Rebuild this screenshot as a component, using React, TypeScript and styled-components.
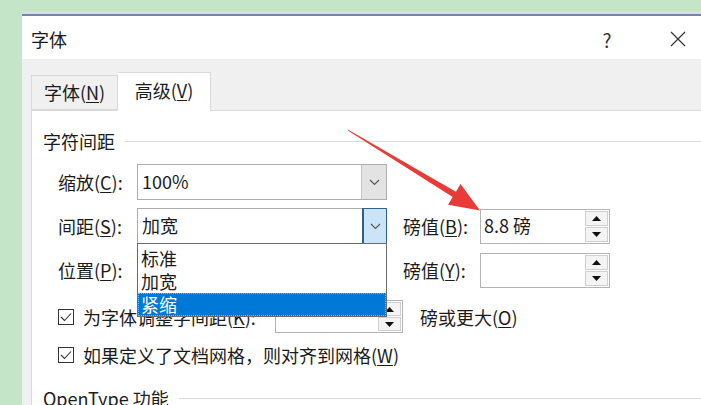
import React from "react";
import styled, { createGlobalStyle } from "styled-components";

const GlobalStyle = createGlobalStyle`
  html, body {
    margin: 0;
    padding: 0;
    background: #c4e5c7;
    overflow: hidden;
  }
  body {
    font-family: "Noto Sans CJK SC", "Microsoft YaHei", sans-serif;
    color: #1b1b1b;
  }
`;

const Screen = styled.div`
  position: relative;
  width: 701px;
  height: 405px;
  padding: 11px 0 0 22px;
  box-sizing: border-box;
  overflow: hidden;
`;

const Dialog = styled.div`
  width: 700px;
  height: 420px;
  background: #f0f0f0;
  border-top: 3px solid #d9dddd;
`;

const TitleBar = styled.div`
  height: 45px;
  display: flex;
  align-items: center;
  padding: 3px 21px 0 9px;
  box-sizing: border-box;
  background: #fff;
  border-top: 2px solid #6d8aa4;
  font-size: 18px;
`;

const TitleText = styled.span`
  flex: 1;
`;

const TitleButton = styled.div<{ $gap?: number }>`
  width: 46px;
  height: 36px;
  display: flex;
  align-items: center;
  justify-content: center;
  margin-left: ${(p) => p.$gap ?? 0}px;
  font-size: 19px;
  color: #333;
`;

const Body = styled.div`
  padding: 13px 0 0 9px;
`;

const TabRow = styled.div`
  display: flex;
  align-items: flex-end;
  height: 38px;
`;

const Tab = styled.div<{ $active?: boolean }>`
  position: relative;
  z-index: ${(p) => (p.$active ? 2 : 1)};
  width: ${(p) => (p.$active ? 93 : 87)}px;
  height: ${(p) => (p.$active ? 39 : 35)}px;
  margin-bottom: ${(p) => (p.$active ? -1 : 0)}px;
  box-sizing: border-box;
  display: flex;
  align-items: center;
  justify-content: center;
  padding-bottom: ${(p) => (p.$active ? 4 : 1)}px;
  background: ${(p) => (p.$active ? "#fff" : "#f0f0f0")};
  border: 1px solid #d9d9d9;
  border-bottom: ${(p) => (p.$active ? "none" : "1px solid #d9d9d9")};
  border-left: ${(p) => (p.$active ? "none" : "1px solid #d9d9d9")};
  font-size: 18px;
`;

const Panel = styled.div`
  height: 320px;
  background: #fff;
  border: 1px solid #d9d9d9;
  padding: 20px 0 0 11px;
  box-sizing: border-box;
`;

const SectionHeader = styled.div<{ $top?: number }>`
  display: flex;
  align-items: center;
  gap: 10px;
  height: 20px;
  margin-top: ${(p) => p.$top ?? 0}px;
  margin-right: 11px;
  font-size: 18px;
  line-height: 20px;
  white-space: nowrap;

  &::after {
    content: "";
    flex: 1;
    border-top: 1px solid #dcdcdc;
  }
`;

const FormGrid = styled.div`
  display: grid;
  grid-template-columns: 79px 250px 93px 130px;
  grid-auto-rows: 36px;
  row-gap: 8px;
  margin-top: 13px;
  padding-left: 15px;
  align-items: center;
  font-size: 18px;
`;

const Label = styled.div<{ $indent?: number }>`
  padding-left: ${(p) => p.$indent ?? 0}px;
  white-space: nowrap;
`;

const Combo = styled.div`
  position: relative;
  height: 36px;
  display: flex;
  box-sizing: border-box;
  border: 1px solid #adadad;
  background: #fff;
`;

const ComboValue = styled.div`
  flex: 1;
  display: flex;
  align-items: center;
  padding-left: 4px;
  padding-bottom: 2px;
`;

const ComboButton = styled.div<{ $focused?: boolean }>`
  width: 24px;
  display: flex;
  align-items: center;
  justify-content: center;
  background: ${(p) => (p.$focused ? "#cce4f7" : "#e3e3e3")};
  border-left: 1px solid ${(p) => (p.$focused ? "#2c628b" : "#c6c6c6")};
  box-shadow: ${(p) => (p.$focused ? "inset 0 0 0 1px #2c628b" : "none")};
  margin: ${(p) => (p.$focused ? "-1px -1px -1px 0" : "0")};
`;

const DropList = styled.div`
  position: absolute;
  z-index: 5;
  top: 100%;
  left: -1px;
  width: 250px;
  padding-top: 3px;
  box-sizing: border-box;
  background: #fff;
  border: 1px solid #6b6b6b;
`;

const DropItem = styled.div<{ $selected?: boolean }>`
  height: 23px;
  line-height: 23px;
  padding-left: 3px;
  background: ${(p) => (p.$selected ? "#0078d7" : "transparent")};
  color: ${(p) => (p.$selected ? "#fff" : "inherit")};
  outline: ${(p) => (p.$selected ? "1px dotted #8fb8e0" : "none")};
  outline-offset: -1px;
`;

const Spin = styled.div<{ $width?: number; $height?: number }>`
  width: ${(p) => p.$width ?? 130}px;
  height: ${(p) => p.$height ?? 36}px;
  display: flex;
  box-sizing: border-box;
  border: 1px solid #b4b4b4;
  background: #fff;
`;

const SpinValue = styled.div`
  flex: 1;
  display: flex;
  align-items: center;
  padding-left: 3px;
  padding-bottom: 2px;
`;

const SpinButtons = styled.div`
  width: 25px;
  display: flex;
  flex-direction: column;
  gap: 1px;
  padding: 1px;
  box-sizing: border-box;
`;

const SpinButton = styled.div`
  flex: 1;
  display: flex;
  align-items: center;
  justify-content: center;
  background: #f4f4f4;
  border: 1px solid #cfcfcf;
`;

const CheckRow = styled.div<{ $top: number; $height: number }>`
  display: flex;
  align-items: center;
  height: ${(p) => p.$height}px;
  margin-top: ${(p) => p.$top}px;
  padding-left: 15px;
  font-size: 18px;
  white-space: nowrap;
`;

const CheckBox = styled.div`
  width: 16px;
  height: 16px;
  box-sizing: border-box;
  border: 1px solid #333;
  background: #fff;
  display: flex;
  align-items: center;
  justify-content: center;
  margin-right: 9px;
`;

const CheckText = styled.span<{ $width?: number }>`
  width: ${(p) => (p.$width ? `${p.$width}px` : "auto")};
`;

const After = styled.span`
  margin-left: 17px;
`;

const Key = styled.u`
  text-underline-offset: 2px;
  text-decoration-thickness: 1px;
`;

const ArrowLayer = styled.svg`
  position: absolute;
  left: 0;
  top: 0;
  z-index: 10;
  pointer-events: none;
`;

const Chevron = () => (
  <svg width="11" height="7" viewBox="0 0 11 7">
    <path d="M1 1l4.5 4.5L10 1" fill="none" stroke="#555" strokeWidth="1.1" />
  </svg>
);

const Up = () => (
  <svg width="9" height="5" viewBox="0 0 9 5">
    <path d="M0 5h9L4.5 0z" fill="#111" />
  </svg>
);

const Down = () => (
  <svg width="9" height="5" viewBox="0 0 9 5">
    <path d="M0 0h9L4.5 5z" fill="#111" />
  </svg>
);

const Tick = () => (
  <svg width="12" height="10" viewBox="0 0 12 10">
    <path d="M1 5l3.5 3.5L11 1.5" fill="none" stroke="#333" strokeWidth="1.1" />
  </svg>
);

const SpinBox = ({ value, width, height }: { value?: string; width?: number; height?: number }) => (
  <Spin $width={width} $height={height}>
    <SpinValue>{value}</SpinValue>
    <SpinButtons>
      <SpinButton>
        <Up />
      </SpinButton>
      <SpinButton>
        <Down />
      </SpinButton>
    </SpinButtons>
  </Spin>
);

const App = () => {
  return (
    <>
      <GlobalStyle />
      <Screen>
        <Dialog>
          <TitleBar>
            <TitleText>字体</TitleText>
            <TitleButton>?</TitleButton>
            <TitleButton $gap={25}>
              <svg width="16" height="16" viewBox="0 0 16 16">
                <path d="M1 1l14 14M15 1L1 15" stroke="#333" strokeWidth="1.2" />
              </svg>
            </TitleButton>
          </TitleBar>
          <Body>
            <TabRow>
              <Tab>
                字体(<Key>N</Key>)
              </Tab>
              <Tab $active>
                高级(<Key>V</Key>)
              </Tab>
            </TabRow>
            <Panel>
              <SectionHeader>字符间距</SectionHeader>
              <FormGrid>
                <Label>
                  缩放(<Key>C</Key>):
                </Label>
                <Combo>
                  <ComboValue>100%</ComboValue>
                  <ComboButton>
                    <Chevron />
                  </ComboButton>
                </Combo>
                <div />
                <div />

                <Label>
                  间距(<Key>S</Key>):
                </Label>
                <Combo>
                  <ComboValue>加宽</ComboValue>
                  <ComboButton $focused>
                    <Chevron />
                  </ComboButton>
                  <DropList>
                    <DropItem>标准</DropItem>
                    <DropItem>加宽</DropItem>
                    <DropItem $selected>紧缩</DropItem>
                  </DropList>
                </Combo>
                <Label $indent={16}>
                  磅值(<Key>B</Key>):
                </Label>
                <SpinBox value="8.8 磅" height={35} />

                <Label>
                  位置(<Key>P</Key>):
                </Label>
                <Combo>
                  <ComboValue />
                  <ComboButton>
                    <Chevron />
                  </ComboButton>
                </Combo>
                <Label $indent={16}>
                  磅值(<Key>Y</Key>):
                </Label>
                <SpinBox height={35} />
              </FormGrid>

              <CheckRow $top={12} $height={33}>
                <CheckBox>
                  <Tick />
                </CheckBox>
                <CheckText $width={192}>
                  为字体调整字间距(<Key>K</Key>):
                </CheckText>
                <SpinBox width={128} height={33} />
                <After>
                  磅或更大(<Key>O</Key>)
                </After>
              </CheckRow>
              <CheckRow $top={10} $height={24}>
                <CheckBox>
                  <Tick />
                </CheckBox>
                <CheckText>
                  如果定义了文档网格，则对齐到网格(<Key>W</Key>)
                </CheckText>
              </CheckRow>

              <SectionHeader $top={21}>OpenType 功能</SectionHeader>
            </Panel>
          </Body>
        </Dialog>
        <ArrowLayer width="701" height="405" viewBox="0 0 701 405">
          <path
            d="M347.4 129.3 L348.6 130.9 L452.7 197 L448 204.7 L480 210.5 L460.5 184.1 L455.9 191.8 Z"
            fill="#e83b37"
          />
        </ArrowLayer>
      </Screen>
    </>
  );
};

export default App;
